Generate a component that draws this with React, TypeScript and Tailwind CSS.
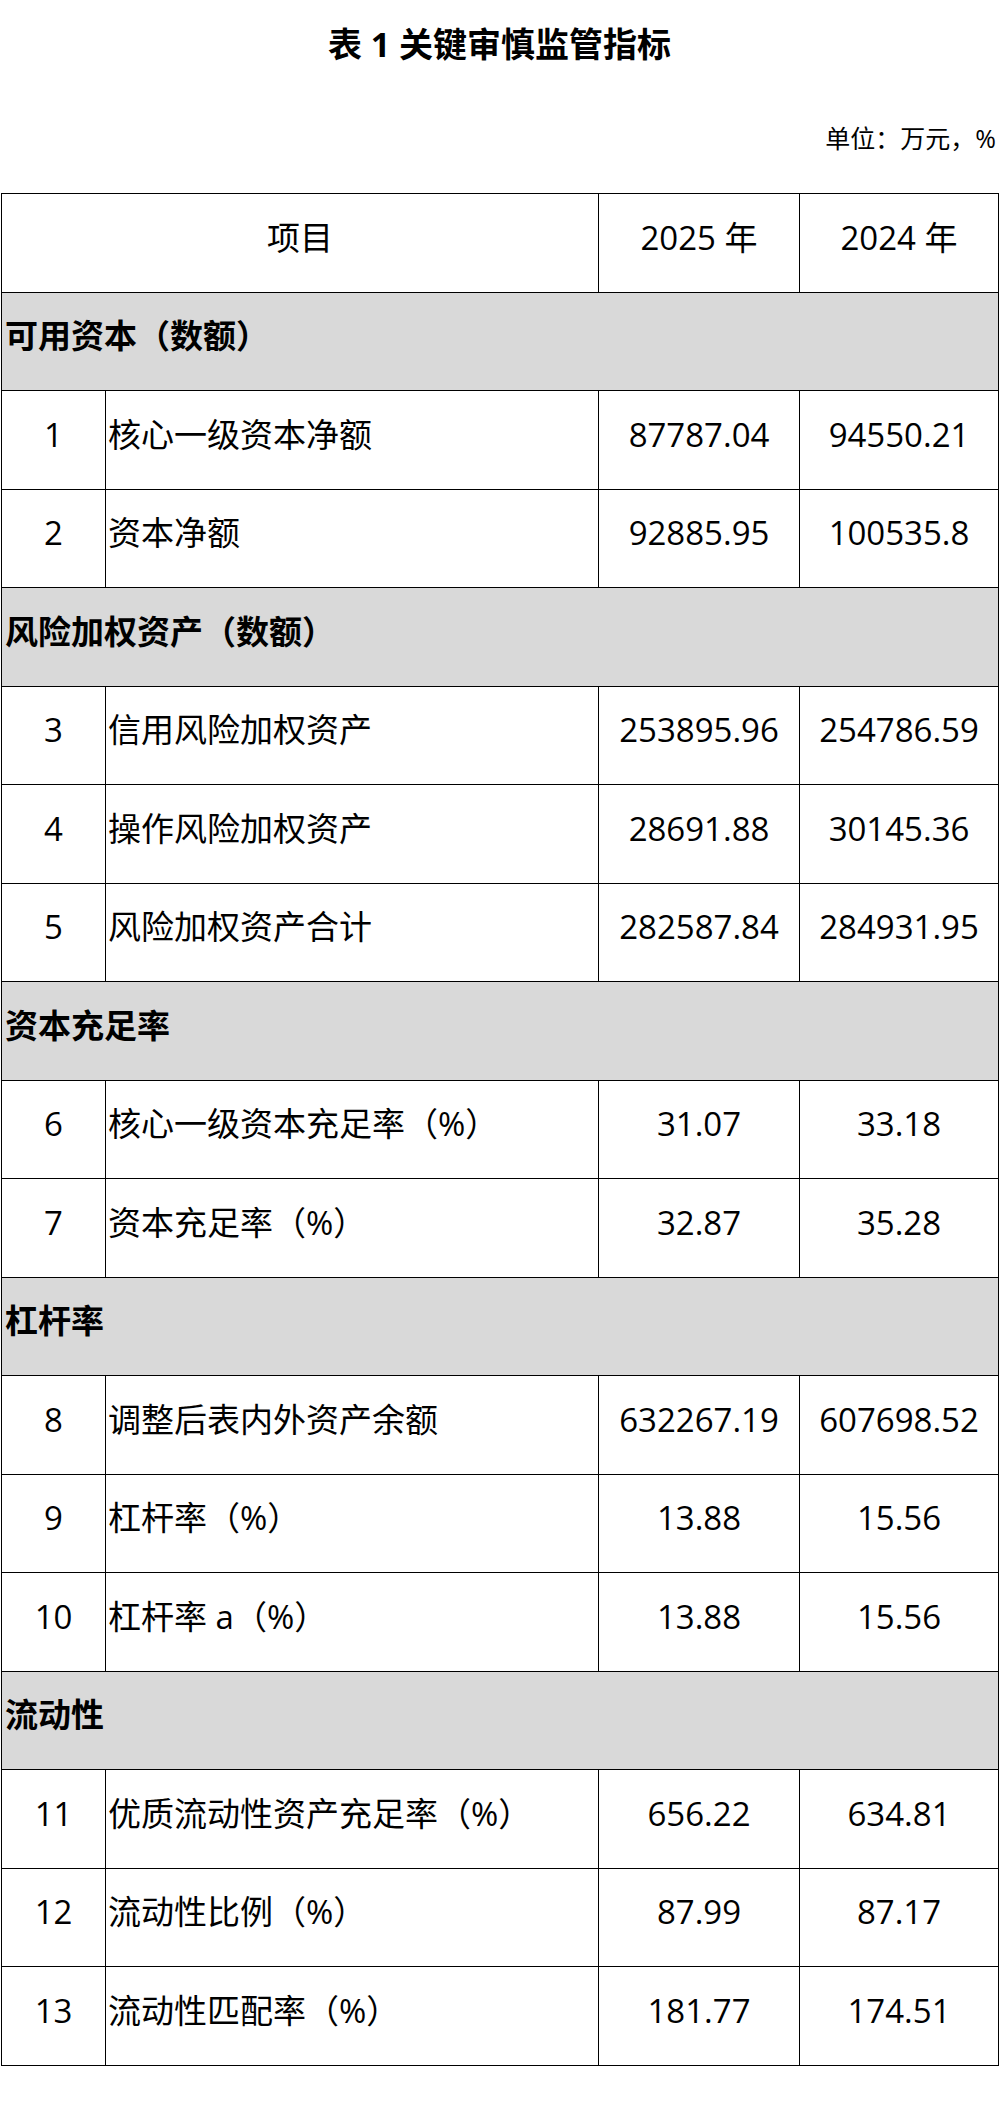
import React from "react";

type Row =
    | { kind: "section"; title: string }
    | { kind: "item"; no: number; name: string; y2025: string; y2024: string };

const rows: Row[] = [
    { kind: "section", title: "可用资本（数额）" },
    { kind: "item", no: 1, name: "核心一级资本净额", y2025: "87787.04", y2024: "94550.21" },
    { kind: "item", no: 2, name: "资本净额", y2025: "92885.95", y2024: "100535.8" },
    { kind: "section", title: "风险加权资产（数额）" },
    { kind: "item", no: 3, name: "信用风险加权资产", y2025: "253895.96", y2024: "254786.59" },
    { kind: "item", no: 4, name: "操作风险加权资产", y2025: "28691.88", y2024: "30145.36" },
    { kind: "item", no: 5, name: "风险加权资产合计", y2025: "282587.84", y2024: "284931.95" },
    { kind: "section", title: "资本充足率" },
    { kind: "item", no: 6, name: "核心一级资本充足率（%）", y2025: "31.07", y2024: "33.18" },
    { kind: "item", no: 7, name: "资本充足率（%）", y2025: "32.87", y2024: "35.28" },
    { kind: "section", title: "杠杆率" },
    { kind: "item", no: 8, name: "调整后表内外资产余额", y2025: "632267.19", y2024: "607698.52" },
    { kind: "item", no: 9, name: "杠杆率（%）", y2025: "13.88", y2024: "15.56" },
    { kind: "item", no: 10, name: "杠杆率 a（%）", y2025: "13.88", y2024: "15.56" },
    { kind: "section", title: "流动性" },
    { kind: "item", no: 11, name: "优质流动性资产充足率（%）", y2025: "656.22", y2024: "634.81" },
    { kind: "item", no: 12, name: "流动性比例（%）", y2025: "87.99", y2024: "87.17" },
    { kind: "item", no: 13, name: "流动性匹配率（%）", y2025: "181.77", y2024: "174.51" },
];

const cell = "border border-black h-[98.5px] align-middle pb-[10px] leading-[40px]";

export default function App() {
    return (
        <div
            className="w-[999px] bg-white text-black"
            style={{ fontFamily: '"Open Sans", "Noto Sans CJK SC", sans-serif' }}
        >
            {/* Title */}
            <h1 className="pt-[24px] text-center text-[34px] leading-[40px] font-bold">表 1 关键审慎监管指标</h1>

            {/* Unit */}
            <div className="mt-[59px] pr-[3px] text-right text-[25px] leading-[30px]">单位：万元，%</div>

            <table className="mt-[40px] ml-[1px] w-[997px] table-fixed border-collapse text-[33px]">
                <colgroup>
                    <col className="w-[104px]" />
                    <col className="w-[493px]" />
                    <col className="w-[201px]" />
                    <col className="w-[199px]" />
                </colgroup>
                <tbody>
                    <tr>
                        <td colSpan={2} className={`${cell} text-center`}>项目</td>
                        <td className={`${cell} text-center`}>2025 年</td>
                        <td className={`${cell} text-center`}>2024 年</td>
                    </tr>
                    {rows.map((r, i) =>
                        r.kind === "section" ? (
                            <tr key={i} className="bg-[#d9d9d9]">
                                <td colSpan={4} className={`${cell} pl-[3px] text-[33px] font-bold`}>
                                    {r.title}
                                </td>
                            </tr>
                        ) : (
                            <tr key={i}>
                                <td className={`${cell} text-center`}>{r.no}</td>
                                <td className={`${cell} pl-[2px] whitespace-nowrap`}>{r.name}</td>
                                <td className={`${cell} text-center`}>{r.y2025}</td>
                                <td className={`${cell} text-center`}>{r.y2024}</td>
                            </tr>
                        )
                    )}
                </tbody>
            </table>
            <div className="h-[37px]" />
        </div>
    );
}
